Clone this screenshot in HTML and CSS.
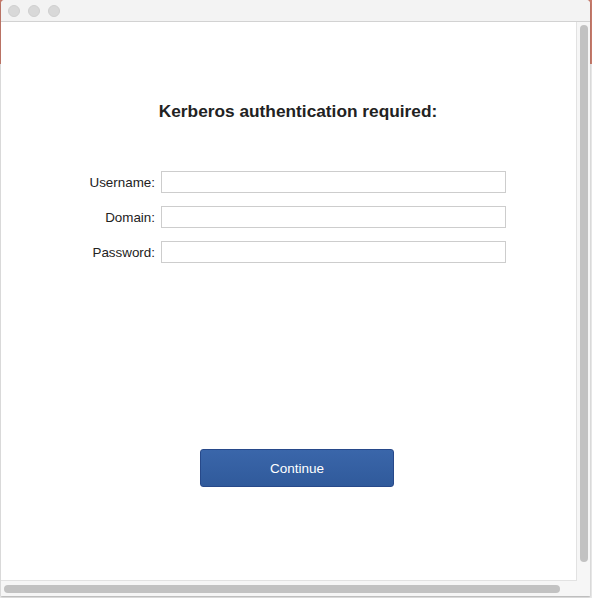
FILE: index.html
```html
<!DOCTYPE html>
<html lang="en">
<head>
  <meta charset="UTF-8" />
  <meta name="viewport" content="width=device-width, initial-scale=1.0"/>
  <title>Kerberos</title>
  <link rel="stylesheet" href="styles.css">
</head>
<body>
  <div class="window">
    <div class="titlebar">
      <span class="dot"></span>
      <span class="dot"></span>
      <span class="dot"></span>
    </div>
    <div class="main">
      <div class="viewport">
        <div class="stage">
          <h1>Kerberos authentication required:</h1>
          <form class="login" id="loginForm">
            <label for="username">Username:</label>
            <input type="text" id="username" />
            <label for="domain">Domain:</label>
            <input type="text" id="domain" />
            <label for="password">Password:</label>
            <input type="password" id="password" />
          </form>
          <div class="actions">
            <button type="submit" form="loginForm">Continue</button>
          </div>
        </div>
      </div>
      <div class="vscroll"><div class="vthumb"></div></div>
    </div>
    <div class="hscroll"><div class="hthumb"></div></div>
  </div>
</body>
</html>
```

FILE: styles.css
```css
body {
  margin: 0;
  padding: 0;
  background: linear-gradient(to bottom, #c77b6c 0, #c77b6c 64px, #e9e9e9 64px);
  font-family: "Liberation Sans", Arial, sans-serif;
  height: 598px;
  overflow: hidden;
}
.window {
  margin-left: 1px;
  width: 589px;
  height: 596px;
  background-color: #f6f6f6;
  border-radius: 4px 4px 0 0;
  box-shadow: 0 1px 2px rgba(0, 0, 0, 0.25);
  display: flex;
  flex-direction: column;
  overflow: hidden;
}
.titlebar {
  height: 21px;
  flex: none;
  background-color: #f3f3f3;
  border-bottom: 1px solid #d2d2d2;
  display: flex;
  align-items: center;
  gap: 8px;
  padding-left: 7px;
}
.dot {
  width: 12px;
  height: 12px;
  border-radius: 50%;
  background-color: #d8d8d8;
  border: 1px solid #cfcfcf;
  box-sizing: border-box;
}
.main {
  flex: 1;
  display: flex;
  min-height: 0;
}
.viewport {
  width: 575px;
  background-color: white;
  border-right: 1px solid #e2e2e2;
  border-bottom: 1px solid #e2e2e2;
  overflow: hidden;
}
.stage {
  width: 594px;
  padding-top: 79px;
}
h1 {
  margin: 0;
  font-size: 17.3px;
  line-height: 20px;
  text-align: center;
  color: #222;
}
.login {
  margin-top: 50px;
  display: grid;
  grid-template-columns: 154px 345px;
  column-gap: 6px;
  row-gap: 13px;
  align-items: center;
}
.login label {
  text-align: right;
  font-size: 13.4px;
  color: #222;
}
.login input {
  height: 22px;
  box-sizing: border-box;
  margin: 0;
  padding: 2px 4px;
  border: 1px solid #cdcdcd;
  border-radius: 0;
  background-color: white;
  font-family: inherit;
  font-size: 13px;
}
.actions {
  margin-top: 186px;
  display: flex;
  justify-content: center;
  padding-right: 2px;
}
button {
  width: 194px;
  height: 38px;
  background: linear-gradient(to bottom, #3a66aa, #305a9b);
  color: white;
  border: 1px solid #27498a;
  border-radius: 3px;
  font-family: inherit;
  font-size: 13.5px;
  cursor: pointer;
}
.vscroll {
  flex: 1;
  padding: 3px 0 0 3px;
}
.vthumb {
  width: 8px;
  height: 537px;
  border-radius: 4px;
  background-color: #c2c2c2;
}
.hscroll {
  height: 15px;
  flex: none;
  padding: 4px 0 0 3px;
  box-sizing: border-box;
}
.hthumb {
  width: 556px;
  height: 8px;
  border-radius: 4px;
  background-color: #c2c2c2;
}
```
